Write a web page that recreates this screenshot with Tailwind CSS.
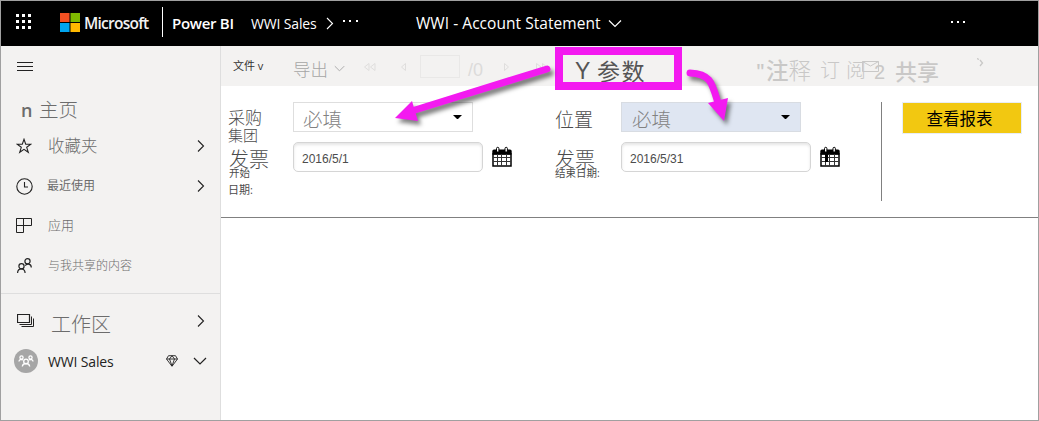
<!DOCTYPE html>
<html lang="zh-CN">
<head>
<meta charset="utf-8">
<title>WWI - Account Statement</title>
<script src="https://cdn.jsdelivr.net/npm/@tailwindcss/browser@4"></script>
</head>
<body class="overflow-hidden">
<svg class="hidden">
  <defs>
    <symbol id="calendar" viewBox="0 0 20 21">
      <path d="M1 8h18v12H1z" fill="#fff" stroke="#000" stroke-width="1.500"/>
      <path d="M.3 8.500V5Q.3 3.500 2 3.500H18Q19.700 3.500 19.700 5V8.500z" fill="#000"/>
      <path d="M5.500 8v12M9.500 8v12M14.500 8v12M1 11.500h18M1 15.500h18" stroke="#333" stroke-width="1"/>
      <path d="M4.500 6V2.500a1.200 1.200 0 0 1 2.400 0V6zM13 6V2.500a1.200 1.200 0 0 1 2.400 0V6z" fill="#fff" stroke="#000"/>
    </symbol>
    <symbol id="right" viewBox="0 0 8 12"><path d="M1 .5 6.500 6 1 11.500" fill="none" stroke="currentColor" stroke-width="1.100"/></symbol>
    <symbol id="down" viewBox="0 0 14 8"><path d="M1 1 7 7l6-6" fill="none" stroke="currentColor" stroke-width="1.200"/></symbol>
  </defs>
</svg>
<div class="relative flex h-[421px] w-[1039px] flex-col overflow-hidden border border-[#a0a0a0] bg-white font-['Open_Sans','Noto_Sans_CJK_SC',sans-serif]">
  <header class="flex h-[45px] shrink-0 items-start bg-black whitespace-nowrap text-white">
    <svg class="mt-[13px] ml-[15px] h-[15px] w-[16px] shrink-0" viewBox="0 0 16 15" fill="#fff"><path d="M0 0h3v3H0zM6 0h3v3H6zM12 0h3v3h-3zM0 6h3v3H0zM6 6h3v3H6zM12 6h3v3h-3zM0 12h3v3H0zM6 12h3v3H6zM12 12h3v3h-3z"/></svg>
    <svg class="mt-[12px] ml-[28px] h-[19px] w-[20px] shrink-0" viewBox="0 0 20 19"><path fill="#f25022" d="M0 0h9.500v9H0z"/><path fill="#7fba00" d="M10.500 0H20v9h-9.500z"/><path fill="#00a4ef" d="M0 10h9.500v9H0z"/><path fill="#ffb900" d="M10.500 10H20v9h-9.500z"/></svg>
    <div class="mt-[11px] ml-[4px] w-[78px] text-[15.500px] leading-[22px] font-semibold tracking-[-0.750px] text-[#f2f2f2]">Microsoft</div>
    <div class="mt-[6px] h-[30px] w-px bg-white"></div>
    <div class="mt-[11px] ml-[9px] w-[79px] text-[15px] leading-[23px] font-semibold tracking-[-0.300px]">Power BI</div>
    <div class="mt-[11px] w-[75px] text-[14px] leading-[23px] tracking-[-0.150px]">WWI Sales</div>
    <svg class="mt-[16px] h-[13px] w-[8px]"><use href="#right"/></svg>
    <svg class="mt-[19px] ml-[9px] h-[3px] w-[15px]" fill="#fff"><path d="M0 0h2v2H0zM6 0h2v2H6zM13 0h2v2h-2z"/></svg>
    <div class="mt-[11px] ml-[58px] w-[192px] text-[15.500px] leading-[23px] tracking-[0.050px]">WWI - Account Statement</div>
    <svg class="mt-[18px] h-[9px] w-[14px]"><use href="#down"/></svg>
    <svg class="mt-[20px] ml-[329px] h-[2px] w-[15px]" fill="#fff"><path d="M0 0h2v2H0zM6 0h2v2H6zM12 0h2v2h-2z"/></svg>
  </header>
  <div class="flex min-h-0 flex-1">
    <nav class="flex w-[220px] shrink-0 flex-col border-r border-[#dedede] bg-[#f3f2f1] whitespace-nowrap text-[#6c6c6c]">
      <svg class="mt-[15px] ml-[16px] h-[11px] w-[16px]" stroke="#222"><path d="M0 1.500h16M0 5.500h16M0 9.500h16"/></svg>
      <div class="mt-[23px] flex h-[30px] items-center pl-[20px]">
        <span class="w-[18px] text-[18px] font-semibold leading-[20px]">n</span>
        <span class="text-[19.500px] leading-[20px] font-light">主页</span>
      </div>
      <div class="mt-[3px] flex h-[36px] items-center pl-[15px]">
        <svg class="h-[16px] w-[16px]" viewBox="0 0 16 16" fill="none" stroke="#222" stroke-width="1.100"><path d="m8 1.300 1.700 4.900h5.200l-4.200 3.100 1.600 5L8 11.300l-4.300 3 1.600-5L1.100 6.200h5.200z"/></svg>
        <span class="ml-[16px] w-[149px] text-[16.500px] leading-[20px] font-light">收藏夹</span>
        <svg class="h-[12px] w-[8px] text-[#222]"><use href="#right"/></svg>
      </div>
      <div class="mt-[4px] flex h-[36px] items-center pl-[15px]">
        <svg class="h-[17px] w-[17px]" viewBox="0 0 17 17" fill="none" stroke="#222" stroke-width="1.100"><circle cx="8.500" cy="8.500" r="7.700"/><path d="M8.500 4v5H12"/></svg>
        <span class="ml-[14px] w-[150px] text-[12px] leading-[20px]">最近使用</span>
        <svg class="h-[12px] w-[8px] text-[#222]"><use href="#right"/></svg>
      </div>
      <div class="mt-[3px] flex h-[36px] items-center pl-[15px]">
        <svg class="h-[15px] w-[16px]" viewBox="0 0 16 15" fill="none" stroke="#222"><path d="M.5.500h15v7H.5zM.5.500v14h7V.5"/></svg>
        <span class="ml-[16px] text-[13px] leading-[20px] font-light">应用</span>
      </div>
      <div class="mt-[5px] flex h-[36px] items-center pl-[16px]">
        <svg class="h-[16px] w-[15px]" viewBox="0 0 15 16" fill="none" stroke="#222" stroke-width="1.200"><circle cx="4.500" cy="8.300" r="2.600"/><path d="M.6 15c0-5.500 7.500-5.500 7.500 0"/><circle cx="10.500" cy="3.300" r="2.600"/><path d="M8.300 7.600c1.500-2.500 6-2 6 2"/></svg>
        <span class="ml-[16px] text-[12px] leading-[20px] font-light">与我共享的内容</span>
      </div>
      <div class="mt-[9px] h-px shrink-0 bg-[#dedede]"></div>
      <div class="mt-[9px] flex h-[36px] items-center pl-[16px]">
        <svg class="h-[14px] w-[17px]" viewBox="0 0 17 14" fill="none" stroke="#222"><path d="M.5.500h12v8H.5z" stroke-width="1.200"/><path d="M2.500 10.500h12V2.500M4.500 12.500h12V4.500"/></svg>
        <span class="ml-[17px] w-[146px] pt-[7px] text-[20px] leading-[22px] font-light">工作区</span>
        <svg class="h-[12px] w-[8px] text-[#222]"><use href="#right"/></svg>
      </div>
      <div class="mt-[4px] flex h-[36px] items-center pl-[13px]">
        <svg class="h-[24px] w-[24px]" viewBox="0 0 24 24" fill="none" stroke="#fff" stroke-width="1.300"><circle cx="12" cy="12" r="12" fill="#a6a6a6" stroke="none"/><circle cx="12" cy="12.500" r="2.300"/><path d="M8.300 17.500c.5-4 6.900-4 7.400 0"/><circle cx="7.500" cy="8.500" r="1.600"/><circle cx="16.500" cy="8.500" r="1.600"/><path d="M5 12.500c0-2 2-2.500 4-1.500M19 12.500c0-2-2-2.500-4-1.500"/></svg>
        <span class="ml-[10px] w-[118px] pt-[2px] text-[14px] leading-[20px] tracking-[-0.150px] text-[#222]">WWI Sales</span>
        <svg class="h-[12px] w-[12px]" viewBox="0 0 12 12" fill="none" stroke="#222" stroke-width=".9"><path d="M2.500.7h7l2 3.300L6 11.300.5 4zM.5 4h11M3.500 4 6 11l2.500-7L6 .7 3.500 4"/></svg>
        <svg class="ml-[15px] h-[8px] w-[14px] text-[#222]"><use href="#down"/></svg>
      </div>
    </nav>
    <main class="flex min-w-0 flex-1 flex-col">
      <div class="flex h-[40px] shrink-0 items-start bg-[#f3f2f1] whitespace-nowrap text-[#c9c8c7]">
        <span class="mt-[12px] ml-[12px] w-[60px] text-[11px] leading-[16px] text-[#333]">文件 v</span>
        <span class="mt-[12px] w-[41px] text-[17.500px] leading-[22px] font-light text-[#a5a5a5]">导出</span>
        <svg class="mt-[19px] h-[7px] w-[11px] text-[#a8a8a8]" viewBox="0 0 14 8"><use href="#down"/></svg>
        <svg class="mt-[16px] ml-[18px] h-[10px] w-[13px]" fill="none" stroke="#dfdedd"><path d="M6 1.500v7L1.500 5zM12 1.500v7L7.500 5z"/></svg>
        <svg class="mt-[16px] ml-[24px] h-[10px] w-[7px]" fill="none" stroke="#dfdedd"><path d="M5.500 1.500v7L1.500 5z"/></svg>
        <div class="mt-[9px] ml-[13px] h-[23px] w-[40px] border border-[#e9e8e7]"></div>
        <span class="mt-[13px] ml-[8px] w-[35px] font-['Liberation_Sans',sans-serif] text-[18px] leading-[22px] text-[#dcdbda]">/0</span>
        <svg class="mt-[16px] h-[10px] w-[7px]" fill="none" stroke="#dfdedd"><path d="M1.500 1.500v7L5.500 5z"/></svg>
        <svg class="mt-[16px] ml-[25px] h-[10px] w-[13px]" fill="none" stroke="#dfdedd"><path d="M1.500 1.500v7L6 5zM7.500 1.500v7L12 5z"/></svg>
        <span class="mt-[12px] ml-[208px] w-[10px] text-[20px] leading-[26px] font-semibold">"</span>
        <span class="mt-[12px] w-[54px] text-[22.500px] leading-[26px]"><span class="font-medium">注</span><span class="font-light">释</span></span>
        <span class="mt-[12px] w-[26px] text-[20px] leading-[26px] font-light">订</span>
        <span class="mt-[12px] w-[16px] text-[20px] leading-[26px] font-light">阅</span>
        <svg class="mt-[15px] h-[11px] w-[17px] shrink-0" fill="none" stroke="#c9c8c7"><path d="M.5.500h16v10H.5zM.5.500 8.500 5l8-4.500"/></svg>
        <span class="mt-[12px] -ml-[5px] w-[21px] font-['Liberation_Sans',sans-serif] text-[20px] leading-[28px]">2</span>
        <span class="mt-[12px] w-[82px] text-[22px] leading-[26px] font-medium">共享</span>
        <svg class="mt-[12px] h-[9px] w-[7px] shrink-0" fill="none" stroke="#c9c8c7" stroke-width="1.300"><path d="m0 .5 2 1M3 2l2.500 3L3 8"/></svg>
      </div>
      <section class="flex h-[132px] shrink-0 items-start border-b border-[#808080] whitespace-nowrap text-[#4c4c4c]">
        <div class="flex w-[72px] flex-col pl-[7px]">
          <span class="mt-[22px] h-[18px] text-[17px] leading-[19px] font-light">采购</span>
          <span class="h-[20px] text-[15px] leading-[18px] font-light">集团</span>
          <span class="mt-[4px] h-[19px] pl-[1px] text-[20px] leading-[20px] font-light">发票</span>
          <span class="h-[14px] pl-[1px] text-[10.500px] leading-[8px]">开始</span>
          <span class="h-[14px] text-[11px] leading-[14px]">日期:</span>
        </div>
        <div class="flex w-[262px] flex-col pt-[16px]">
          <div class="flex h-[30px] w-[180px] items-center justify-between border border-[#dedede] pr-[10px] pl-[9px] text-[#828282]">
            <span class="mt-[6px] text-[19.500px] leading-[24px] font-light">必填</span>
            <svg class="h-[4px] w-[9px]"><path d="M0 0h9L4.500 4.500z" fill="#000"/></svg>
          </div>
          <div class="mt-[10px] flex items-start">
            <div class="h-[30px] w-[190px] rounded-[5px] border border-[#d5d5d5] pt-[2px] pl-[8px] font-['Liberation_Sans',sans-serif] text-[12px] leading-[28px] shadow-[inset_0_2px_3px_rgba(0,0,0,0.1)]">2016/5/1</div>
            <svg class="mt-[4px] ml-[9px] h-[21px] w-[20px]"><use href="#calendar"/></svg>
          </div>
        </div>
        <div class="flex w-[66px] flex-col">
          <span class="mt-[24px] h-[20px] text-[19px] leading-[20px] font-light">位置</span>
          <span class="mt-[20px] h-[19px] text-[20px] leading-[20px] font-light">发票</span>
          <span class="h-[14px] text-[10.500px] leading-[8px]">结束日期:</span>
        </div>
        <div class="flex w-[260px] flex-col pt-[16px]">
          <div class="flex h-[30px] w-[180px] items-center justify-between border border-[#d8dce2] bg-[#dfe6f2] pr-[10px] pl-[10px] text-[#828282]">
            <span class="mt-[5px] text-[19.500px] leading-[24px] font-light">必填</span>
            <svg class="h-[4px] w-[9px]"><path d="M0 0h9L4.500 4.500z" fill="#000"/></svg>
          </div>
          <div class="mt-[10px] flex items-start">
            <div class="h-[30px] w-[190px] rounded-[5px] border border-[#d5d5d5] pt-[2px] pl-[8px] font-['Liberation_Sans',sans-serif] text-[12px] leading-[28px] shadow-[inset_0_2px_3px_rgba(0,0,0,0.1)]">2016/5/31</div>
            <svg class="mt-[4px] ml-[9px] h-[21px] w-[20px]"><use href="#calendar"/><path d="M5 8h3v8H5z"/></svg>
          </div>
        </div>
        <div class="mt-[16px] h-[99px] w-px bg-[#808080]"></div>
        <button class="mt-[16px] ml-[20px] flex h-[32px] w-[120px] items-center justify-center border border-[#e8edf5] bg-[#f2c811] pt-[2px] pr-[5px] text-[16.500px] leading-[20px] text-black">查看报表</button>
      </section>
    </main>
  </div>

  <!-- callout with two arrows over the parameter pane -->
  <div class="absolute top-[46px] left-[554px] flex h-[43px] w-[127px] overflow-hidden border-8 border-[#f31af0] bg-[#f3f2f1] pt-[3px] pl-[12px] text-[23px] leading-[26px] whitespace-nowrap text-[#555]"><span class="w-[22px] font-['Liberation_Sans',sans-serif]">Y</span><span class="tracking-[1.500px]">参数</span></div>
  <svg class="absolute top-0 left-0 h-[140px] w-[760px] drop-shadow-[3px_4px_2px_rgba(0,0,0,0.5)]" viewBox="1 1 760 140" fill="none" stroke="#f31af0" stroke-width="7" stroke-linecap="round">
    <path d="M547 69 415 110"/><path d="m395 118 17-17 6 20z" fill="#f31af0" stroke="none"/>
    <path d="M690 73C711 74 712 83 718 103"/><path d="m724 121-16-18 20-5z" fill="#f31af0" stroke="none"/>
  </svg>
</div>
</body>
</html>
